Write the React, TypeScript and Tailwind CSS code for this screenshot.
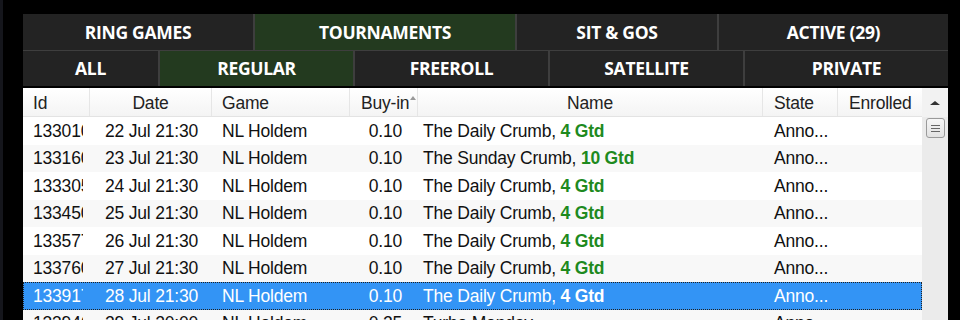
import React from "react";

const rows = [
  { id: "133010", date: "22 Jul 21:30", buy: "0.10", name: "The Daily Crumb, ", gtd: "4 Gtd" },
  { id: "133160", date: "23 Jul 21:30", buy: "0.10", name: "The Sunday Crumb, ", gtd: "10 Gtd" },
  { id: "133305", date: "24 Jul 21:30", buy: "0.10", name: "The Daily Crumb, ", gtd: "4 Gtd" },
  { id: "133450", date: "25 Jul 21:30", buy: "0.10", name: "The Daily Crumb, ", gtd: "4 Gtd" },
  { id: "133577", date: "26 Jul 21:30", buy: "0.10", name: "The Daily Crumb, ", gtd: "4 Gtd" },
  { id: "133760", date: "27 Jul 21:30", buy: "0.10", name: "The Daily Crumb, ", gtd: "4 Gtd" },
  { id: "133917", date: "28 Jul 21:30", buy: "0.10", name: "The Daily Crumb, ", gtd: "4 Gtd", sel: true },
  { id: "133946", date: "29 Jul 20:00", buy: "0.25", name: "Turbo Monday", gtd: "" },
];

const cols = "grid-cols-[67px_122px_138px_68px_345px_75px_84px]";

function Tab({ label, active }: { label: string; active?: boolean }) {
  return (
    <div
      className={`flex items-center justify-center text-white font-bold text-[17.5px] tracking-[-0.3px] ${
        active ? "bg-[#233a1f]" : "bg-[#232323]"
      }`}
    >
      {label}
    </div>
  );
}

export default function App() {
  return (
    <div className="w-[960px] h-[320px] bg-black overflow-hidden flex" style={{ fontFamily: "'Liberation Sans', Arial, sans-serif" }}>
      <div className="w-[3px] bg-[#15161c]" />
      <div className="ml-[20px] mt-[14px] w-[925px] flex flex-col">
        <div className="flex flex-col gap-[1px] bg-[#3e3e3e] shrink-0" style={{ fontFamily: "'Open Sans', sans-serif" }}>
          <div className="grid grid-cols-[230px_260px_200px_229px] gap-[2px] h-[36px] bg-[#3e3e3e]">
            <Tab label="RING GAMES" />
            <Tab label="TOURNAMENTS" active />
            <Tab label="SIT & GOS" />
            <Tab label="ACTIVE (29)" />
          </div>
          <div className="grid grid-cols-[135px_193px_193px_193px_203px] gap-[2px] h-[35px] bg-[#3e3e3e]">
            <Tab label="ALL" />
            <Tab label="REGULAR" active />
            <Tab label="FREEROLL" />
            <Tab label="SATELLITE" />
            <Tab label="PRIVATE" />
          </div>
        </div>
        <div className="mt-[2px] flex bg-white flex-1 overflow-hidden">
          <div className="w-[899px] flex flex-col text-[17.5px] text-[#111] tracking-[-0.2px]">
            <div className={`grid ${cols} h-[29px] shrink-0 bg-gradient-to-b from-white to-[#f4f4f4] border-b border-[#e3e3e3] text-[#222]`}>
              <div className="pl-[10px] pt-[2px] flex items-center border-r border-[#e6e6e6]">Id</div>
              <div className="pt-[2px] flex items-center justify-center border-r border-[#e6e6e6]">Date</div>
              <div className="pl-[10px] pt-[2px] flex items-center border-r border-[#e6e6e6]">Game</div>
              <div className="pl-[11px] pt-[2px] flex items-center border-r border-[#e6e6e6] relative">
                Buy-in
                <span className="absolute left-[60px] top-[8px] w-0 h-0 border-l-[3px] border-r-[3px] border-b-[4px] border-l-transparent border-r-transparent border-b-[#999]" />
              </div>
              <div className="pt-[2px] flex items-center justify-center border-r border-[#e6e6e6]">Name</div>
              <div className="pl-[11px] pt-[2px] flex items-center border-r border-[#e6e6e6]">State</div>
              <div className="pl-[11px] pt-[2px] flex items-center">Enrolled</div>
            </div>
            {rows.map((r, i) => (
              <div
                key={r.id}
                className={`grid ${cols} h-[27.5px] shrink-0 items-center ${
                  r.sel
                    ? "bg-[#3394f5] text-white outline outline-1 outline-dotted outline-[#222] -outline-offset-1"
                    : i % 2 === 1
                    ? "bg-[#f8f8f8]"
                    : "bg-white"
                }`}
              >
                <div className="ml-[10px] mr-[7px] overflow-hidden whitespace-nowrap">{r.id}</div>
                <div className="pl-[15px] whitespace-nowrap">{r.date}</div>
                <div className="pl-[10px] whitespace-nowrap">NL Holdem</div>
                <div className="pr-[16px] text-right">{r.buy}</div>
                <div className="pl-[5px] whitespace-nowrap overflow-hidden">
                  {r.name}
                  {r.gtd && (
                    <span className={`font-bold ${r.sel ? "text-white" : "text-[#1e8a1e]"}`}>{r.gtd}</span>
                  )}
                </div>
                <div className="pl-[11px] whitespace-nowrap">Anno...</div>
                <div />
              </div>
            ))}
          </div>
          <div className="w-[26px] bg-[#ebebeb] flex flex-col items-center">
            <div className="h-[29px] w-full bg-[#f2f2f2] flex items-center justify-center">
              <span className="w-0 h-0 border-l-[5px] border-r-[5px] border-b-[4px] border-l-transparent border-r-transparent border-b-[#333]" />
            </div>
            <div className="mt-[1px] ml-[1px] w-[19px] h-[20px] rounded-[3px] border border-[#9a9a9a] bg-gradient-to-b from-[#f6f6f6] to-[#e2e2e2] flex flex-col items-center justify-center gap-[2px]">
              <span className="w-[9px] h-[1px] bg-[#666]" />
              <span className="w-[9px] h-[1px] bg-[#666]" />
              <span className="w-[9px] h-[1px] bg-[#666]" />
            </div>
          </div>
        </div>
      </div>
    </div>
  );
}
